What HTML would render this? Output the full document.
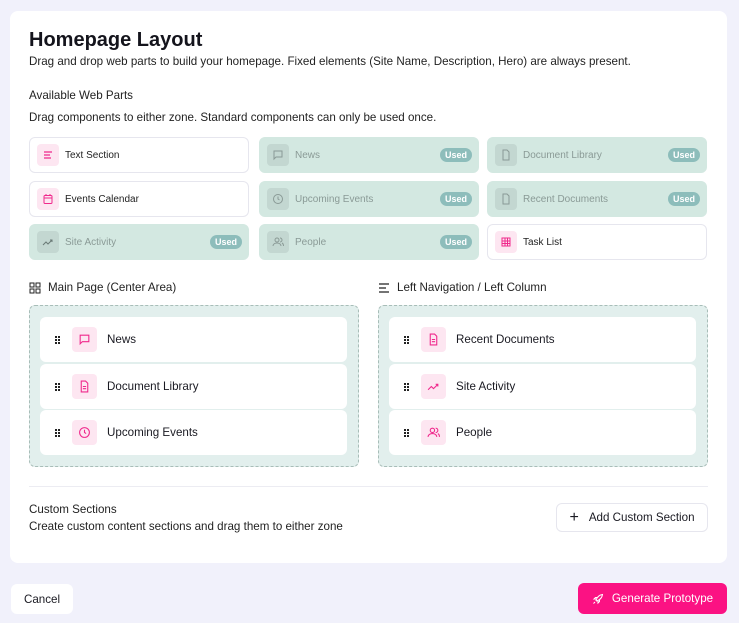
<!DOCTYPE html>
<html><head><style>
*{box-sizing:border-box;margin:0;padding:0}
body{width:739px;height:623px;background:#f1f1fb;font-family:"Liberation Sans",sans-serif;color:#1a1a22;position:relative;overflow:hidden}
.card{position:absolute;left:10px;top:11px;width:717px;height:552px;background:#fff;border-radius:8px}
.a{position:absolute}
h1{position:absolute;left:29px;top:29px;font-size:20px;font-weight:bold;color:#14141c}
.t{position:absolute;font-size:11.6px;color:#222}
.wp{position:absolute;width:220px;height:36px;border-radius:6px;border:1px solid #e6e6ee;background:#fff;font-size:10px;display:flex;align-items:center;color:#222}
.wp.u{background:#d3e8e1;border-color:#d3e8e1;color:#8a9a96}
.ic{width:22px;height:22px;border-radius:4px;background:#fde6f1;margin:0 6px 0 7px;display:flex;align-items:center;justify-content:center}
.u .ic{background:#c3d7d1}
.used{position:absolute;right:6px;top:10px;background:#8dbdbb;color:#fff;font-size:9px;font-weight:bold;padding:2px 5px;border-radius:8px}
.zone{position:absolute;top:305px;width:330px;height:162px;border:1px dashed #a8bdb8;border-radius:6px;background:#e2efed}
.it{position:absolute;left:10px;width:307px;height:45px;background:#fff;border-radius:6px;display:flex;align-items:center;font-size:11.6px}
.it .ic{width:25px;height:25px;margin:0 10px 0 11px}
.dots{width:6px;margin-left:15px;font-size:0}
.dots i{display:inline-block;width:2px;height:2px;background:#222;margin:1px 1px 0 0}
.btn{position:absolute;border-radius:6px;font-size:11.6px;display:flex;align-items:center;justify-content:center}
</style></head><body>
<div class="card"></div>
<h1>Homepage Layout</h1>
<div class="t" style="left:29px;top:55px">Drag and drop web parts to build your homepage. Fixed elements (Site Name, Description, Hero) are always present.</div>
<div class="t" style="left:29px;top:89px">Available Web Parts</div>
<div class="t" style="left:29px;top:111px">Drag components to either zone. Standard components can only be used once.</div>

<div class="wp" style="left:29px;top:137px"><div class="ic"><svg width="12" height="12" viewBox="0 0 12 12" stroke="#f0288c" stroke-width="1.2"><path d="M2 3h8M2 6h6M2 9h7"/></svg></div>Text Section</div>
<div class="wp u" style="left:259px;top:137px"><div class="ic"><svg width="12" height="12" viewBox="0 0 12 12" fill="none" stroke="#8a9a96"><path d="M2 2h8v6H4l-2 2z"/></svg></div>News<span class="used">Used</span></div>
<div class="wp u" style="left:487px;top:137px"><div class="ic"><svg width="12" height="12" viewBox="0 0 12 12" fill="none" stroke="#8a9a96"><path d="M3 1h4l2 2v8H3z"/></svg></div>Document Library<span class="used">Used</span></div>
<div class="wp" style="left:29px;top:181px"><div class="ic"><svg width="12" height="12" viewBox="0 0 12 12" fill="none" stroke="#f0288c"><rect x="2" y="2.5" width="8" height="8" rx="1"/><path d="M2 5h8M4 1v2M8 1v2"/></svg></div>Events Calendar</div>
<div class="wp u" style="left:259px;top:181px"><div class="ic"><svg width="12" height="12" viewBox="0 0 12 12" fill="none" stroke="#8a9a96"><circle cx="6" cy="6" r="4.5"/><path d="M6 3.5V6l1.5 1"/></svg></div>Upcoming Events<span class="used">Used</span></div>
<div class="wp u" style="left:487px;top:181px"><div class="ic"><svg width="12" height="12" viewBox="0 0 12 12" fill="none" stroke="#8a9a96"><path d="M3 1h4l2 2v8H3z"/></svg></div>Recent Documents<span class="used">Used</span></div>
<div class="wp u" style="left:29px;top:224px"><div class="ic"><svg width="12" height="12" viewBox="0 0 12 12" fill="none" stroke="#6a7a76"><path d="M1 9l3-3 2 2 4-4M8 4h2v2"/></svg></div>Site Activity<span class="used">Used</span></div>
<div class="wp u" style="left:259px;top:224px"><div class="ic"><svg width="12" height="12" viewBox="0 0 12 12" fill="none" stroke="#8a9a96"><circle cx="5" cy="4" r="2"/><path d="M1 10c0-2 2-3 4-3s4 1 4 3M8 2a2 2 0 010 4M10 7c1 .5 1.5 1.5 1.5 3"/></svg></div>People<span class="used">Used</span></div>
<div class="wp" style="left:487px;top:224px"><div class="ic"><svg width="12" height="12" viewBox="0 0 12 12" fill="none" stroke="#f0288c"><rect x="2" y="2" width="8" height="8"/><path d="M2 5h8M2 7.5h8M5 2v8M7.5 2v8"/></svg></div>Task List</div>

<svg class="a" style="left:29px;top:282px" width="12" height="12" viewBox="0 0 12 12" fill="none" stroke="#222"><rect x="1" y="1" width="4" height="4"/><rect x="7" y="1" width="4" height="4"/><rect x="1" y="7" width="4" height="4"/><rect x="7" y="7" width="4" height="4"/></svg>
<div class="t" style="left:48px;top:281px">Main Page (Center Area)</div>
<svg class="a" style="left:378px;top:282px" width="12" height="12" viewBox="0 0 12 12" stroke="#222" stroke-width="1.2"><path d="M1 2h10M1 6h7M1 10h10"/></svg>
<div class="t" style="left:397px;top:281px">Left Navigation / Left Column</div>

<div class="zone" style="left:29px">
<div class="it" style="top:11px"><div class="dots"><i></i><i></i><i></i><i></i><i></i><i></i></div><div class="ic"><svg width="13" height="13" viewBox="0 0 12 12" fill="none" stroke="#f0288c"><path d="M2 2h8v6H4l-2 2z"/></svg></div>News</div>
<div class="it" style="top:58px"><div class="dots"><i></i><i></i><i></i><i></i><i></i><i></i></div><div class="ic"><svg width="13" height="13" viewBox="0 0 12 12" fill="none" stroke="#f0288c"><path d="M3 1h4l2 2v8H3zM4.5 6h3M4.5 8h3"/></svg></div>Document Library</div>
<div class="it" style="top:104px"><div class="dots"><i></i><i></i><i></i><i></i><i></i><i></i></div><div class="ic"><svg width="13" height="13" viewBox="0 0 12 12" fill="none" stroke="#f0288c"><circle cx="6" cy="6" r="4.5"/><path d="M6 3.5V6l1.5 1"/></svg></div>Upcoming Events</div>
</div>
<div class="zone" style="left:378px">
<div class="it" style="top:11px"><div class="dots"><i></i><i></i><i></i><i></i><i></i><i></i></div><div class="ic"><svg width="13" height="13" viewBox="0 0 12 12" fill="none" stroke="#f0288c"><path d="M3 1h4l2 2v8H3zM4.5 6h3M4.5 8h3"/></svg></div>Recent Documents</div>
<div class="it" style="top:58px"><div class="dots"><i></i><i></i><i></i><i></i><i></i><i></i></div><div class="ic"><svg width="13" height="13" viewBox="0 0 12 12" fill="none" stroke="#f0288c"><path d="M1 9l3-3 2 2 4-4M8 4h2v2"/></svg></div>Site Activity</div>
<div class="it" style="top:104px"><div class="dots"><i></i><i></i><i></i><i></i><i></i><i></i></div><div class="ic"><svg width="13" height="13" viewBox="0 0 12 12" fill="none" stroke="#f0288c"><circle cx="5" cy="4" r="2"/><path d="M1 10c0-2 2-3 4-3s4 1 4 3M8 2a2 2 0 010 4M10 7c1 .5 1.5 1.5 1.5 3"/></svg></div>People</div>
</div>

<div class="a" style="left:29px;top:486px;width:679px;height:1px;background:#ececf2"></div>
<div class="t" style="left:29px;top:503px">Custom Sections</div>
<div class="t" style="left:29px;top:520px">Create custom content sections and drag them to either zone</div>
<div class="btn" style="left:556px;top:503px;width:152px;height:29px;border:1px solid #e6e6ee;background:#fff"><span style="font-size:16px;margin-right:10px;font-weight:300">+</span>Add Custom Section</div>

<div class="btn" style="left:11px;top:584px;width:62px;height:30px;background:#fff">Cancel</div>
<div class="btn" style="left:578px;top:583px;width:149px;height:31px;background:#fb1283;color:#fff"><svg width="12" height="12" viewBox="0 0 12 12" fill="none" stroke="#fff" style="margin-right:8px"><path d="M3 9l-1.5 1.5M4 7.5C5 4 7 2 10.5 1.5 10 5 8 7 4.5 8zM4 6H2l1.5-1.5H5M6 8v2l1.5-1.5V7"/></svg>Generate Prototype</div>
</body></html>
